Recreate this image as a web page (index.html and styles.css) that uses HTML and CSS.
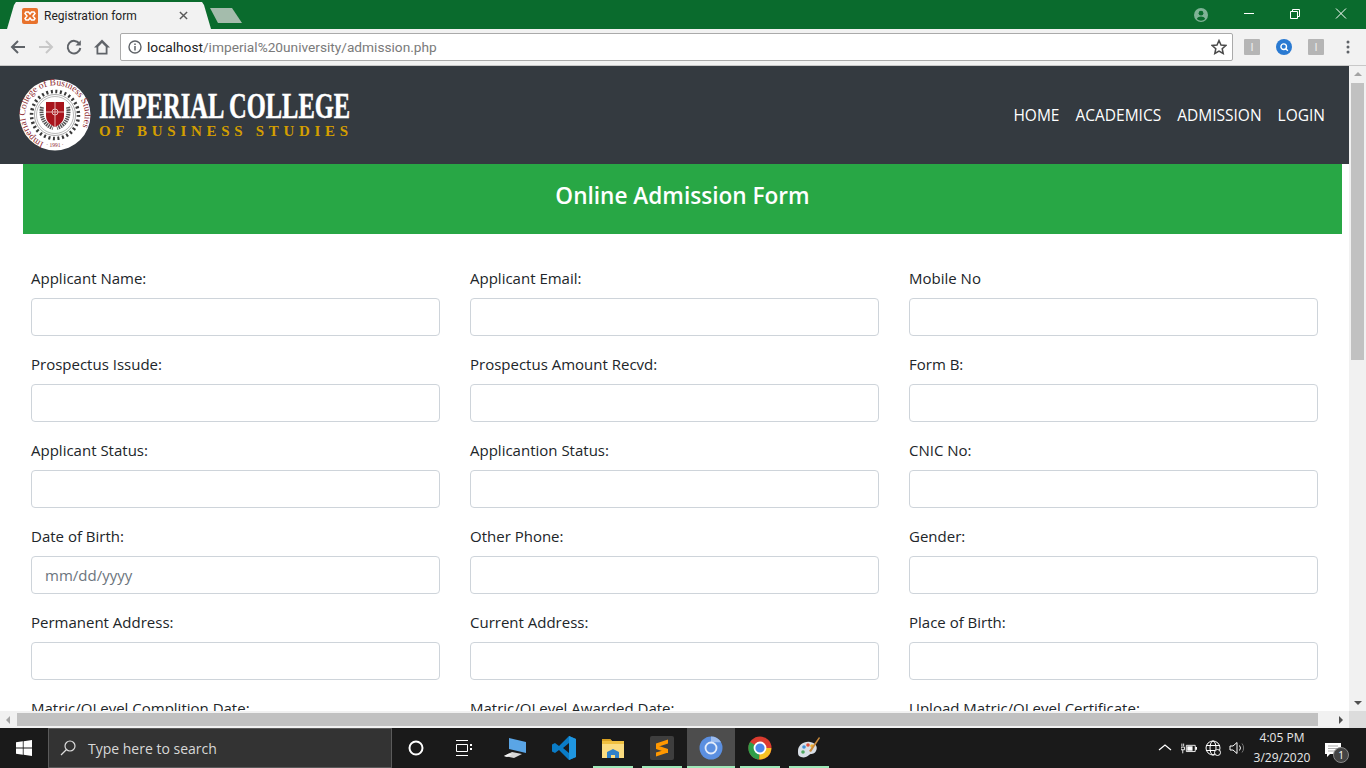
FILE: index.html
```html
<!DOCTYPE html>
<html lang="en">
<head>
    <meta charset="UTF-8">
    <meta name="viewport" content="width=device-width, initial-scale=1.0">
    <title>Registration form</title>
    <link rel="stylesheet" href="styles.css">
</head>
<body>
    <div class="tabstrip">
        <div class="tab">
            <svg class="favicon" viewBox="0 0 16 16"><rect width="16" height="16" rx="2" fill="#e8722c"/><path d="M4 4h2.500L8 6l1.500-2H12l1 1.500L11 8l2 2.500L12 12H9.500L8 10l-1.500 2H4l-1-1.500L5 8 3 5.500z" fill="none" stroke="#fff" stroke-width="1.500"/></svg>
            <span class="tab-title">Registration form</span>
            <svg class="tab-close" viewBox="0 0 10 10"><path d="M1 1l8 8M9 1l-8 8" stroke="#5a5a5a" stroke-width="1.600"/></svg>
        </div>
        <div class="new-tab"></div>
        <div class="window-controls">
            <svg class="profile" viewBox="0 0 14 14"><circle cx="7" cy="7" r="7" fill="#7fb396"/><circle cx="7" cy="5.200" r="2.400" fill="#0a6b2d"/><path d="M2.800 11c.8-2 2.500-2.600 4.200-2.600s3.400.6 4.200 2.600a6 6 0 0 1-8.400 0z" fill="#0a6b2d"/></svg>
            <svg class="win-btn" viewBox="0 0 46 29"><path d="M18 13.500h10" stroke="#fff"/></svg>
            <svg class="win-btn" viewBox="0 0 46 29"><path d="M18.500 11.500h7v7h-7zM20.500 11.500v-2h7v7h-2" fill="none" stroke="#fff"/></svg>
            <svg class="win-btn" viewBox="0 0 46 29"><path d="M18 8.500l10 10M28 8.500l-10 10" stroke="#fff"/></svg>
        </div>
    </div>

    <div class="toolbar">
        <svg class="tool-icon" viewBox="0 0 18 18"><path d="M16 9H3M9 3L3 9l6 6" fill="none" stroke="#5f6368" stroke-width="2"/></svg>
        <svg class="tool-icon" viewBox="0 0 18 18"><path d="M2 9h13M9 3l6 6-6 6" fill="none" stroke="#c8c8c8" stroke-width="2"/></svg>
        <svg class="tool-icon" viewBox="0 0 18 18"><path d="M14.500 6A6.300 6.300 0 1 0 15.300 10" fill="none" stroke="#5f6368" stroke-width="2"/><path d="M15.800 2.200v5.300h-5.300z" fill="#5f6368"/></svg>
        <svg class="tool-icon home-icon" viewBox="0 0 18 18"><path d="M9 1.500L1 9.500h2.500v7h11v-7H17zM5.300 14.800V8.700L9 5l3.700 3.700v6.100z" fill="#5f6368" fill-rule="evenodd"/></svg>
        <div class="omnibox">
            <svg class="info-icon" viewBox="0 0 14 14"><circle cx="7" cy="7" r="6" fill="none" stroke="#5f6368" stroke-width="1.400"/><path d="M7 6v4.500M7 3.500v1.400" stroke="#5f6368" stroke-width="1.500"/></svg>
            <span class="url"><span class="url-host">localhost</span>/imperial%20university/admission.php</span>
            <svg class="star" viewBox="0 0 16 16"><path d="M8 1.500l2 4.500 4.800.5-3.600 3.200 1 4.800L8 12l-4.200 2.500 1-4.800L1.200 6.500 6 6z" fill="none" stroke="#4a4a4a" stroke-width="1.500"/></svg>
        </div>
        <div class="ext-icons">
            <span class="ext-gray">I</span>
            <svg class="ext-blue" viewBox="0 0 16 16"><circle cx="8" cy="8" r="8" fill="#2a7ad2"/><circle cx="7.700" cy="7.700" r="2.800" fill="none" stroke="#fff" stroke-width="1.400"/><path d="M9.800 9.800l2 2" stroke="#fff" stroke-width="1.400"/></svg>
            <span class="ext-gray">I</span>
            <svg class="menu-dots" viewBox="0 0 4 14"><circle cx="2" cy="2" r="1.500" fill="#5f6368"/><circle cx="2" cy="7" r="1.500" fill="#5f6368"/><circle cx="2" cy="12" r="1.500" fill="#5f6368"/></svg>
        </div>
    </div>

    <div class="viewport">
        <div class="page">
            <header class="site-header">
                <div class="brand">
                    <svg class="seal" viewBox="0 0 72 72">
                        <defs>
                            <path id="seal-ring" d="M36 65.800A29.800 29.800 0 1 1 36.100 65.800"/>
                        </defs>
                        <circle cx="36" cy="36" r="35.500" fill="#fff"/>
                        <text class="seal-text"><textPath href="#seal-ring" startOffset="6%">Imperial College of Business Studies</textPath></text>
                        <text class="seal-year" x="36" y="68" text-anchor="middle">· 1991 ·</text>
                        <circle cx="36" cy="36" r="23.500" fill="none" stroke="#3a3a3a" stroke-width="3.500" stroke-dasharray="2 2.600"/>
                        <circle cx="36" cy="36" r="20.500" fill="none" stroke="#aaa" stroke-width="1"/>
                        <circle cx="36" cy="36" r="18.500" fill="none" stroke="#bbb" stroke-width="1"/>
                        <path d="M23 28c-2 9 2 18 11 21M49 28c2 9-2 18-11 21" fill="none" stroke="#555" stroke-width="4" stroke-dasharray="1.500 .8"/>
                        <path d="M27 23h18v14c0 6-5 9-9 11-4-2-9-5-9-11z" fill="#a8141c"/>
                        <path d="M36 23v25M27 33h18" stroke="#e8b0b0" stroke-width="1"/>
                        <circle cx="36" cy="33" r="3" fill="none" stroke="#e8c0c0" stroke-width="1"/>
                    </svg>
                    <div class="brand-text">
                        <div class="brand-name">IMPERIAL COLLEGE</div>
                        <div class="brand-sub">OF BUSINESS STUDIES</div>
                    </div>
                </div>
                <nav class="site-nav">
                    <a href="#">HOME</a>
                    <a href="#">ACADEMICS</a>
                    <a href="#">ADMISSION</a>
                    <a href="#">LOGIN</a>
                </nav>
            </header>

            <div class="form-banner">
                <h1>Online Admission Form</h1>
            </div>

            <form class="admission-form">
                <div class="form-group"><label>Applicant Name:</label><input type="text"></div>
                <div class="form-group"><label>Applicant Email:</label><input type="text"></div>
                <div class="form-group"><label>Mobile No</label><input type="text"></div>

                <div class="form-group"><label>Prospectus Issude:</label><input type="text"></div>
                <div class="form-group"><label>Prospectus Amount Recvd:</label><input type="text"></div>
                <div class="form-group"><label>Form B:</label><input type="text"></div>

                <div class="form-group"><label>Applicant Status:</label><input type="text"></div>
                <div class="form-group"><label>Applicantion Status:</label><input type="text"></div>
                <div class="form-group"><label>CNIC No:</label><input type="text"></div>

                <div class="form-group"><label>Date of Birth:</label><input type="text" placeholder="mm/dd/yyyy"></div>
                <div class="form-group"><label>Other Phone:</label><input type="text"></div>
                <div class="form-group"><label>Gender:</label><input type="text"></div>

                <div class="form-group"><label>Permanent Address:</label><input type="text"></div>
                <div class="form-group"><label>Current Address:</label><input type="text"></div>
                <div class="form-group"><label>Place of Birth:</label><input type="text"></div>

                <div class="form-group"><label>Matric/OLevel Complition Date:</label><input type="text"></div>
                <div class="form-group"><label>Matric/OLevel Awarded Date:</label><input type="text"></div>
                <div class="form-group"><label>Upload Matric/OLevel Certificate:</label><input type="text"></div>
            </form>
        </div>
        <div class="vscroll">
            <span class="arrow-up"></span>
            <div class="vthumb"></div>
            <span class="arrow-down"></span>
        </div>
    </div>

    <div class="hscroll">
        <span class="arrow-left"></span>
        <div class="hthumb"></div>
        <span class="arrow-right"></span>
        <div class="scroll-corner"></div>
    </div>

    <div class="taskbar">
        <div class="start">
            <svg viewBox="0 0 16 16" width="16" height="16"><path d="M0 2.300l6.800-1v6.300H0zM7.600 1.200L16 0v7.600H7.600zM0 8.400h6.800v6.300l-6.800-1zM7.600 8.400H16V16l-8.400-1.200z" fill="#fff"/></svg>
        </div>
        <div class="search-box">
            <svg viewBox="0 0 16 16" width="16" height="16"><circle cx="10" cy="6" r="5" fill="none" stroke="#ddd" stroke-width="1.200"/><path d="M6.500 9.500L1 15" stroke="#ddd" stroke-width="1.200"/></svg>
            <span>Type here to search</span>
        </div>
        <div class="task-btn">
            <svg viewBox="0 0 16 16" width="16" height="16"><circle cx="8" cy="8" r="6.500" fill="none" stroke="#fff" stroke-width="2"/></svg>
        </div>
        <div class="task-btn">
            <svg viewBox="0 0 16 16" width="16" height="16"><path d="M0 .500h12M0 15.500h12M.5 4.500h11v7H.5z" fill="none" stroke="#fff"/><path d="M14 4h2v2h-2zM14 8h2v2h-2z" fill="#fff"/></svg>
        </div>
        <div class="apps">
            <div class="app">
                <svg viewBox="0 0 24 24" width="24" height="24"><path d="M6 2l17 4v11L6 13z" fill="#5aa5e6"/><path d="M1 20l8-4 10 2-8 4z" fill="#d8d8d8"/><path d="M1 20l5-2.500 3 .7-5 2.800z" fill="#f2f2f2"/></svg>
            </div>
            <div class="app">
                <svg viewBox="0 0 24 24" width="24" height="24"><path d="M17 0l7 3v18l-7 3L7 14l-4 3-3-1.500v-7L3 7l4 3zM17 7l-6 5 6 5z" fill="#0a7cc7" fill-rule="evenodd"/><path d="M17 0l7 3v18l-7 3V17z" fill="#1f96e0"/></svg>
            </div>
            <div class="app running">
                <svg viewBox="0 0 24 24" width="24" height="24"><path d="M1 3h8l2 2h12v17H1z" fill="#f0c040"/><path d="M1 3h8l2 2H1z" fill="#d9a020"/><path d="M1 8h22v14H1z" fill="#fbdc80"/><path d="M6 22v-6l6-3 6 3v6h-4v-3h-4v3z" fill="#2f80c8"/></svg>
            </div>
            <div class="app running">
                <svg viewBox="0 0 24 24" width="24" height="24"><rect width="24" height="24" rx="2" fill="#3e3e3e"/><path d="M18 3.500v4L6 11.500v-4zM6 9l12 4v4L6 13zM18 13v3.500L6 20.500V16.500z" fill="#ff9800"/></svg>
            </div>
            <div class="app active">
                <svg viewBox="0 0 24 24" width="24" height="24"><circle cx="12" cy="12" r="11.500" fill="#5b8fe0"/><path d="M12 .500a11.500 11.500 0 0 1 10 5.700H12z" fill="#9cbcef"/><circle cx="12" cy="12" r="5.500" fill="#5b8fe0" stroke="#e4ecfa" stroke-width="1.800"/></svg>
            </div>
            <div class="app running">
                <svg viewBox="0 0 24 24" width="24" height="24"><circle cx="12" cy="12" r="11.500" fill="#db3b2f"/><path d="M12 12L2 6a11.500 11.500 0 0 0 9 17.500z" fill="#2f9e48"/><path d="M12 12h11.300a11.500 11.500 0 0 1-12 11.500z" fill="#f7c325"/><circle cx="12" cy="12" r="5.500" fill="#4a86e8" stroke="#fff" stroke-width="1.800"/></svg>
            </div>
            <div class="app running">
                <svg viewBox="0 0 24 24" width="24" height="24"><path d="M1 15C1 9 7 5 13 6s8 5 6 9-5 2-7 4-5 3-8 2-3-3-3-6z" fill="#d9dfe6"/><circle cx="7" cy="11" r="1.800" fill="#3f8fd8"/><circle cx="11" cy="9" r="1.800" fill="#e0503c"/><circle cx="15" cy="10" r="1.800" fill="#f0b030"/><circle cx="6" cy="16" r="1.800" fill="#50a860"/><path d="M22 1l1 1-9 14-2-1z" fill="#c98a3c"/></svg>
            </div>
        </div>
        <div class="tray">
            <svg class="tray-icon" viewBox="0 0 16 16"><path d="M2 10l6-5 6 5" fill="none" stroke="#fff" stroke-width="1.200"/></svg>
            <svg class="tray-icon" viewBox="0 0 18 16"><path d="M6 5h10v7H6z" fill="none" stroke="#fff"/><path d="M7 6h6v5H7zM16 7h2v3h-2z" fill="#fff"/><path d="M0 7h4v3H0zM1 3v3M3 3v3M2 10v4" stroke="#fff" fill="none"/></svg>
            <svg class="tray-icon" viewBox="0 0 16 16"><circle cx="8" cy="8" r="7" fill="none" stroke="#fff"/><ellipse cx="8" cy="8" rx="3" ry="7" fill="none" stroke="#fff"/><path d="M1 5.500h14M1 10.500h14" stroke="#fff"/><circle cx="12.500" cy="12.500" r="3" fill="#1a1a1a" stroke="#fff"/></svg>
            <svg class="tray-icon tray-volume" viewBox="0 0 16 16"><path d="M1 6h3l4-3.500v11L4 10H1z" fill="none" stroke="#fff"/><path d="M10.500 5.500a4 4 0 0 1 0 5" fill="none" stroke="#fff"/><path d="M13 3.500a7 7 0 0 1 0 9" fill="none" stroke="#777"/></svg>
            <div class="clock">
                <div>4:05 PM</div>
                <div>3/29/2020</div>
            </div>
            <div class="notify">
                <svg viewBox="0 0 16 14" width="16" height="14"><path d="M0 0h16v11H5l-3 3v-3H0z" fill="#fff"/><path d="M3 3h10M3 5.500h10M3 8h7" stroke="#888" stroke-width=".7"/></svg>
                <span class="notify-count">1</span>
            </div>
        </div>
    </div>
</body>
</html>
```

FILE: styles.css
```css
* {
    box-sizing: border-box;
}
html, body {
    height: 100%;
}
body {
    margin: 0;
    display: flex;
    flex-direction: column;
    height: 768px;
    overflow: hidden;
    font-family: "Open Sans", sans-serif;
    background-color: #fff;
}

/* browser window */
.tabstrip {
    height: 29px;
    flex: none;
    display: flex;
    align-items: flex-end;
    background-color: #0a6b2d;
}
.tab {
    width: 204px;
    height: 27px;
    margin-left: 7px;
    padding-left: 15px;
    display: flex;
    align-items: center;
    background-color: #f2f2f2;
    clip-path: polygon(0 100%, 7px 3px, 9px 0, 195px 0, 197px 3px, 100% 100%);
}
.favicon {
    width: 16px;
    height: 16px;
    margin-right: 6px;
}
.tab-title {
    width: 135px;
    font-family: "Roboto", sans-serif;
    font-size: 12px;
    color: #222;
}
.tab-close {
    width: 9px;
    height: 9px;
}
.new-tab {
    width: 32px;
    height: 15px;
    margin: 0 0 6px -1px;
    background-color: #a4bcac;
    clip-path: polygon(0 0, 22px 0, 100% 100%, 8px 100%);
}
.window-controls {
    margin-left: auto;
    height: 29px;
    padding-right: 2px;
    display: flex;
    align-items: center;
}
.profile {
    width: 14px;
    height: 14px;
    margin-right: 18px;
}
.win-btn {
    width: 46px;
    height: 29px;
}
.toolbar {
    height: 37px;
    flex: none;
    padding: 4px 0 4px 9px;
    display: flex;
    align-items: center;
    background-color: #f2f2f2;
    border-bottom: 1px solid #c8c8c8;
}
.tool-icon {
    width: 18px;
    height: 18px;
    margin-right: 10px;
}
.home-icon {
    margin-right: 9px;
}
.omnibox {
    width: 1113px;
    height: 28px;
    padding: 0 5px 0 7px;
    display: flex;
    align-items: center;
    background-color: #fff;
    border: 1px solid #aaa;
    border-radius: 2px;
}
.info-icon {
    width: 14px;
    height: 14px;
    margin-right: 5px;
}
.url {
    flex: 1;
    font-family: "Roboto", sans-serif;
    font-size: 13.700px;
    color: #7a7a7a;
}
.url-host {
    color: #222;
}
.star {
    width: 16px;
    height: 16px;
}
.ext-icons {
    flex: 1;
    display: flex;
    align-items: center;
    padding-left: 11px;
}
.ext-gray {
    width: 16px;
    height: 16px;
    background-color: #b5b5b5;
    border-radius: 1px;
    font-family: "Liberation Sans", sans-serif;
    font-size: 11px;
    line-height: 16px;
    text-align: center;
    color: #eee;
}
.ext-blue {
    width: 16px;
    height: 16px;
    margin: 0 16px;
}
.menu-dots {
    width: 4px;
    height: 14px;
    margin-left: 22px;
}

/* page area */
.viewport {
    height: 645px;
    flex: none;
    display: flex;
}
.page {
    width: 1349px;
    overflow: hidden;
}
.site-header {
    height: 98px;
    padding: 0 16px 0 19px;
    display: flex;
    align-items: center;
    justify-content: space-between;
    background-color: #343a40;
}
.brand {
    display: flex;
    align-items: center;
}
.seal {
    width: 72px;
    height: 72px;
    margin-right: 8px;
}
.seal-text {
    font-family: "Liberation Serif", serif;
    font-size: 9.500px;
    fill: #8e2a30;
}
.seal-year {
    font-family: "Liberation Serif", serif;
    font-size: 5.500px;
    fill: #8e2a30;
}
.brand-text {
    width: 252px;
    font-family: "Liberation Serif", serif;
    font-weight: bold;
    white-space: nowrap;
}
.brand-name {
    font-size: 35px;
    line-height: 32px;
    color: #fff;
    -webkit-text-stroke: 0.5px #fff;
    transform: scaleX(0.7);
    transform-origin: left;
}
.brand-sub {
    font-size: 15px;
    line-height: 17px;
    letter-spacing: 4.700px;
    color: #d39e00;
}
.site-nav {
    display: flex;
}
.site-nav a {
    padding: 0 8px;
    font-size: 15.500px;
    color: #fff;
    text-decoration: none;
}
.form-banner {
    width: 1319px;
    height: 70px;
    margin-left: 23px;
    padding-bottom: 8px;
    display: flex;
    align-items: center;
    justify-content: center;
    background-color: #28a745;
}
.form-banner h1 {
    margin: 0;
    font-size: 22.600px;
    font-weight: 600;
    color: #fff;
}
.admission-form {
    padding: 32px 0 0 31px;
    display: grid;
    grid-template-columns: repeat(3, 409px);
    column-gap: 30px;
}
.form-group {
    margin-bottom: 16px;
}
.form-group label {
    display: block;
    margin-bottom: 8px;
    font-size: 15px;
    line-height: 24px;
    color: #212529;
}
.form-group input {
    display: block;
    width: 100%;
    height: 38px;
    padding: 6px 13px;
    font-family: "Open Sans", sans-serif;
    font-size: 15px;
    color: #495057;
    background-color: #fff;
    border: 1px solid #ced4da;
    border-radius: 4px;
}
.form-group input::placeholder {
    color: #6c757d;
    opacity: 1;
}

/* scrollbars */
.vscroll {
    width: 17px;
    display: flex;
    flex-direction: column;
    align-items: center;
    background-color: #f1f1f1;
}
.arrow-up, .arrow-down {
    width: 0;
    height: 0;
    border-left: 4px solid transparent;
    border-right: 4px solid transparent;
}
.arrow-up {
    margin-top: 6px;
    border-bottom: 4px solid #a3a3a3;
}
.arrow-down {
    margin: auto 0 6px;
    border-top: 4px solid #505050;
}
.vthumb {
    width: 13px;
    height: 277px;
    margin-top: 7px;
    background-color: #c1c1c1;
}
.hscroll {
    height: 17px;
    flex: none;
    display: flex;
    align-items: center;
    background-color: #f1f1f1;
}
.arrow-left, .arrow-right {
    width: 0;
    height: 0;
    flex: none;
    border-top: 4px solid transparent;
    border-bottom: 4px solid transparent;
}
.arrow-left {
    margin: 0 7px 0 6px;
    border-right: 4px solid #a3a3a3;
}
.arrow-right {
    margin: 0 6px 0 21px;
    border-left: 4px solid #505050;
}
.hthumb {
    width: 1301px;
    height: 13px;
    flex: none;
    background-color: #c1c1c1;
}
.scroll-corner {
    width: 17px;
    height: 17px;
    flex: none;
    background-color: #dcdcdc;
}

/* taskbar */
.taskbar {
    height: 40px;
    flex: none;
    display: flex;
    background-color: #1a1a1a;
}
.start {
    width: 48px;
    display: flex;
    align-items: center;
    justify-content: center;
}
.search-box {
    width: 344px;
    padding-left: 11px;
    display: flex;
    align-items: center;
    gap: 12px;
    background-color: #333;
    border: 1px solid #5a5a5a;
    font-family: "Open Sans", sans-serif;
    font-size: 14px;
    color: #d8d8d8;
}
.task-btn {
    width: 48px;
    display: flex;
    align-items: center;
    justify-content: center;
}
.apps {
    margin-left: 3px;
    display: flex;
    gap: 1px;
}
.app {
    position: relative;
    width: 48px;
    display: flex;
    align-items: center;
    justify-content: center;
}
.app.running::after, .app.active::after {
    content: "";
    position: absolute;
    left: 4px;
    right: 4px;
    bottom: 0;
    height: 2px;
    background-color: #9fe8b8;
}
.app.active {
    background-color: #4d4d4d;
}
.app.active::after {
    left: 0;
    right: 0;
}
.tray {
    margin-left: auto;
    display: flex;
    align-items: center;
}
.tray-icon {
    width: 16px;
    height: 16px;
    margin-right: 8px;
}
.tray-volume {
    margin-right: 0;
}
.clock {
    width: 74px;
    margin-right: 6px;
    font-size: 12px;
    line-height: 20px;
    text-align: center;
    color: #e8e8e8;
}
.notify {
    position: relative;
    width: 41px;
    height: 40px;
    padding-top: 12px;
}
.notify-count {
    position: absolute;
    left: 8px;
    top: 19px;
    width: 16px;
    height: 16px;
    border-radius: 50%;
    background-color: #444;
    border: 1px solid #888;
    font-size: 10px;
    line-height: 14px;
    text-align: center;
    color: #fff;
}
```
